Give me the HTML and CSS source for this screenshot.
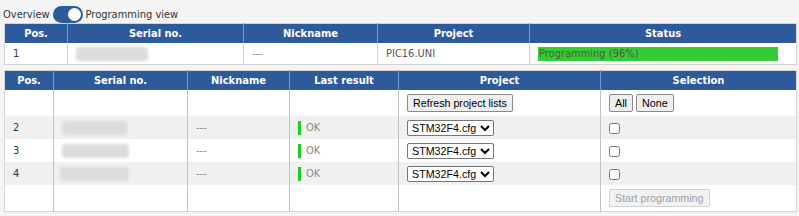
FILE: index.html
```html
<!DOCTYPE html>
<html lang="en">
<head>
  <meta charset="UTF-8">
  <title>Programming view</title>
  <link rel="stylesheet" href="styles.css">
</head>
<body>

  <div class="view-switch">
    <span>Overview</span>
    <label class="toggle"><span class="knob"></span></label>
    <span>Programming view</span>
  </div>

  <table class="grid" id="running">
    <colgroup>
      <col style="width:63px"><col style="width:176px"><col style="width:134px"><col style="width:152px"><col>
    </colgroup>
    <tr class="head-row">
      <th>Pos.</th><th>Serial no.</th><th>Nickname</th><th>Project</th><th>Status</th>
    </tr>
    <tr class="run-row">
      <td>1</td>
      <td><span class="serial" style="width:72px"></span></td>
      <td class="muted">---</td>
      <td class="project">PIC16.UNI</td>
      <td><div class="progress" style="width:96%">Programming (96%)</div></td>
    </tr>
  </table>

  <table class="grid" id="slots">
    <colgroup>
      <col style="width:49px"><col style="width:134px"><col style="width:102px"><col style="width:109px"><col style="width:202px"><col>
    </colgroup>
    <tr class="head-row">
      <th>Pos.</th><th>Serial no.</th><th>Nickname</th><th>Last result</th><th>Project</th><th>Selection</th>
    </tr>
    <tr class="tall">
      <td></td><td></td><td></td><td></td>
      <td><button class="btn">Refresh project lists</button></td>
      <td><button class="btn">All</button> <button class="btn">None</button></td>
    </tr>
    <tr class="odd">
      <td>2</td>
      <td><span class="serial" style="width:65px"></span></td>
      <td class="muted">---</td>
      <td><span class="result ok">OK</span></td>
      <td><select><option>STM32F4.cfg</option></select></td>
      <td><input type="checkbox"></td>
    </tr>
    <tr>
      <td>3</td>
      <td><span class="serial" style="width:67px"></span></td>
      <td class="muted">---</td>
      <td><span class="result ok">OK</span></td>
      <td><select><option>STM32F4.cfg</option></select></td>
      <td><input type="checkbox"></td>
    </tr>
    <tr class="odd">
      <td>4</td>
      <td><span class="serial shift" style="width:69px"></span></td>
      <td class="muted">---</td>
      <td><span class="result ok">OK</span></td>
      <td><select><option>STM32F4.cfg</option></select></td>
      <td><input type="checkbox"></td>
    </tr>
    <tr class="tall">
      <td></td><td></td><td></td><td></td><td></td>
      <td><button class="btn" disabled>Start programming</button></td>
    </tr>
  </table>

</body>
</html>
```

FILE: styles.css
```css
:root {
  --head-bg: #2c5a9b;
  --line: #d4d4d4;
  --col-line: #c2c2c2;
  --page-bg: #f4f4f4;
  --green: #33cc33;
}

body {
  margin: 0;
  padding: 5px 2px 0 4px;
  background: var(--page-bg);
  font-family: "DejaVu Sans Condensed", "DejaVu Sans", sans-serif;
  font-size: 11px;
  color: #333;
}

.view-switch {
  display: flex;
  align-items: center;
  gap: 3px;
  height: 18px;
  margin-left: -1px;
}

.toggle {
  width: 30px;
  height: 17px;
  border-radius: 9px;
  background: var(--head-bg);
  position: relative;
}

.toggle .knob {
  position: absolute;
  right: 2px;
  top: 2px;
  width: 13px;
  height: 13px;
  border-radius: 50%;
  background: #fff;
}

.grid {
  width: 100%;
  table-layout: fixed;
  border-collapse: collapse;
  border: 1px solid var(--line);
  background: #fff;
}

.grid th {
  background: var(--head-bg);
  color: #fff;
  font-weight: bold;
  height: 19px;
  padding: 0;
  border-left: 1px solid #7d98c0;
}

.grid th:first-child {
  border-left: none;
}

.grid td {
  padding: 0 8px;
  border-left: 1px solid var(--col-line);
  vertical-align: middle;
  white-space: nowrap;
}

.grid td:first-child {
  border-left: none;
}

#running {
  margin-bottom: 5px;
}

#running td {
  border-left-color: var(--line);
}

.run-row td {
  height: 21px;
}

#slots tr td {
  height: 23px;
}

#slots tr.tall td {
  height: 26px;
}

#slots tr.odd td {
  background: #f0f0f0;
}

.muted {
  color: #888;
}

.project {
  color: #555;
}

.serial {
  display: inline-block;
  height: 14px;
  vertical-align: middle;
  background: #dcdcdc;
  border-radius: 3px;
  filter: blur(1.5px);
}

.serial.shift {
  margin-left: -2px;
}

.progress {
  background: var(--green);
  color: #4d5a4d;
  height: 14px;
  line-height: 14px;
  padding-left: 1px;
  box-sizing: border-box;
}

.result {
  display: inline-block;
  padding-left: 5px;
  line-height: 14px;
  color: #888;
  border-left: 3px solid #22cc22;
}

.btn {
  font-family: "Liberation Sans", Arial, sans-serif;
  font-size: 10.7px;
  height: 18px;
  padding: 0 5px;
  color: #000;
  background: #efefef;
  border: 1px solid #8a8a8a;
  border-radius: 2px;
  vertical-align: middle;
}

.btn:disabled {
  color: #a0a0a0;
  background: #f2f2f2;
  border-color: #d0d0d0;
}

select {
  font-family: "Liberation Sans", Arial, sans-serif;
  font-size: 10.7px;
  height: 16px;
  padding: 0;
  color: #000;
  background: #fff;
  border: 1px solid #767676;
  border-radius: 2px;
  vertical-align: middle;
}

input[type="checkbox"] {
  width: 11px;
  height: 11px;
  margin: 0;
  vertical-align: middle;
}
```
